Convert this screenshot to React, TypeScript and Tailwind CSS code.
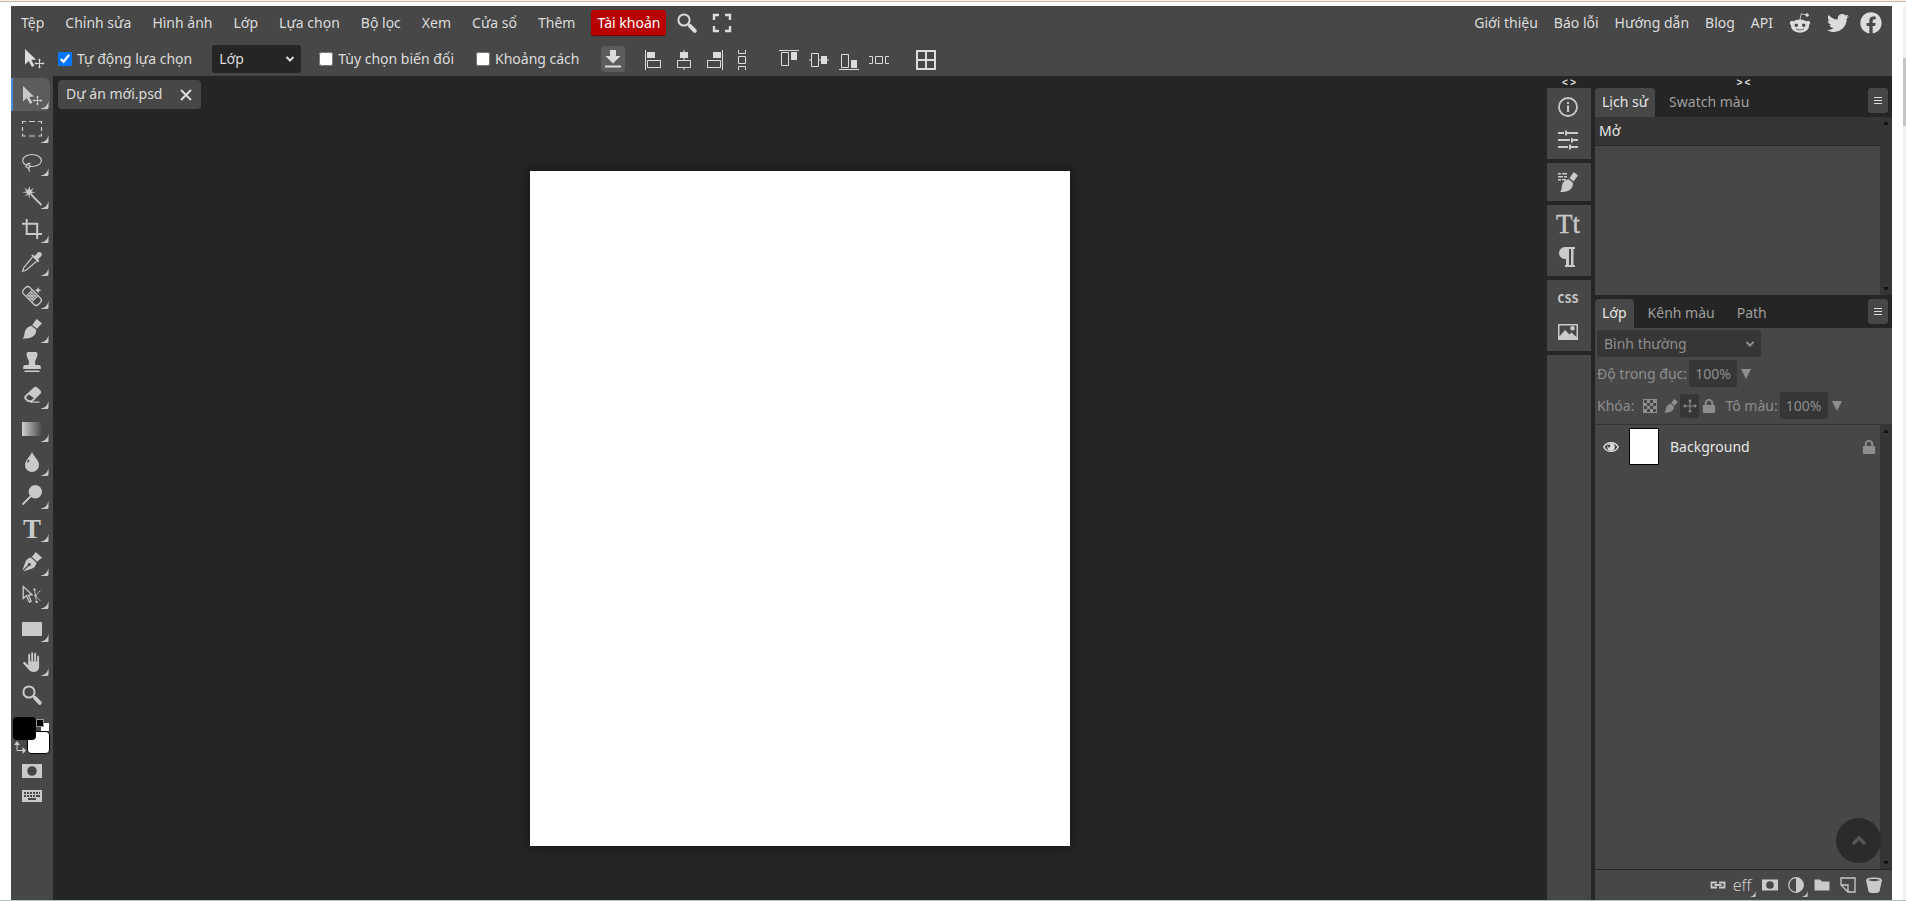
import type { ReactNode } from 'react';
import { FaFacebook, FaRedditAlien, FaTwitter } from 'react-icons/fa';

const menuItems = ['Tệp', 'Chỉnh sửa', 'Hình ảnh', 'Lớp', 'Lựa chọn', 'Bộ lọc', 'Xem', 'Cửa sổ', 'Thêm'];
const siteLinks = ['Giới thiệu', 'Báo lỗi', 'Hướng dẫn', 'Blog', 'API'];

interface IconProps {
  children: ReactNode;
  className?: string;
  viewBox?: string;
}

function Icon({ children, className = 'size-5', viewBox = '0 0 20 20' }: IconProps) {
  return (
    <svg viewBox={viewBox} className={`shrink-0 overflow-visible ${className}`} fill="currentColor" aria-hidden="true">
      {children}
    </svg>
  );
}

/* Shared drawings */

const moveIcon = (
  <>
    <path d="M1 0v15.500l3.800-3.600 3.200 6 2.400-1.300-3.100-5.600 4.700-.500z" />
    <path d="M15.500 10v9M11 14.500h9" stroke="currentColor" strokeWidth="1" />
    <path d="M15.500 9.500l1.500 2h-3zM15.500 19.500l1.500-2h-3zM10.500 14.500l2-1.500v3zM20.500 14.500l-2-1.500v3z" />
  </>
);

const brushIcon = (
  <>
    <path d="M14.500 0L20 4.200l-5 5.600-4.800-3.900z" />
    <path d="M9.500 6.800l4.700 3.900c.300 3.300-1.500 6-4.200 7.300-2.500 1.200-5.800 1.700-9.500 1.500 1.800-1.500 1.700-3.300 2.100-5.500.600-3.600 3.200-6.400 6.900-7.200z" />
  </>
);

const searchIcon = (
  <>
    <circle cx="7" cy="7" r="5.600" fill="none" stroke="currentColor" strokeWidth="2" />
    <path d="M11 11l2.500 2.500" stroke="currentColor" strokeWidth="2" />
    <path d="M13.200 13.200l4.600 4.600" stroke="currentColor" strokeWidth="4" strokeLinecap="round" />
  </>
);

const lockIcon = (
  <>
    <path d="M4.500 9V5.500a3.500 3.500 0 0 1 7 0V9" fill="none" stroke="currentColor" strokeWidth="2" />
    <rect x="1.500" y="7.500" width="13" height="8.500" rx="1.200" />
  </>
);

const maskIcon = (
  <path fillRule="evenodd" d="M0 3h20v14H0zM10 5.200a4.800 4.800 0 1 0 0 9.600 4.800 4.800 0 0 0 0-9.600z" />
);

interface Tool {
  name: string;
  icon: ReactNode;
  single?: boolean;
}

const tools: Tool[] = [
  { name: 'Di chuyển', icon: moveIcon },
  {
    name: 'Vùng chọn',
    icon: <path d="M.500 5V2.500H4M7 2.500h6M16 2.500h3.500V5M19.500 8v4M19.500 14.500V17H16M13 17H7M4 17H.500v-2.500M.500 12V8" fill="none" stroke="currentColor" strokeWidth="1.200" />,
  },
  {
    name: 'Lasso',
    icon: (
      <g fill="none" stroke="currentColor" strokeWidth="1.200">
        <path d="M4.500 13.200C2.200 12.200.700 10.500.700 8.500.700 5 4.800 2.500 10 2.500s9.400 2.500 9.400 6-4.200 6-9.400 6c-1.200 0-2.200-.100-3.200-.300" />
        <path d="M6.500 15c-1.500.700-3 .200-2.600-1 .300-1.400 2.800-1.700 3.600-.500.900 1.400 0 2.700-1.300 3.200M6 16l1.800 3.500M4.500 12.500c2-1.500 3.500-1.500 4-.500" />
      </g>
    ),
  },
  {
    name: 'Đũa thần',
    icon: (
      <>
        <path d="M7.500 0l.700 4.300 3.600-2.500-2.400 3.600 4.400.800-4.400.900 2.200 3.400-3.500-2.300-.900 4.600-.900-4.500-3.700 2.500 2.500-3.700L0 6.300l4.500-.900L2.200 1.800l3.700 2.500z" />
        <path d="M9.500 9l10 10" stroke="currentColor" strokeWidth="1.800" />
      </>
    ),
  },
  {
    name: 'Cắt',
    icon: <path d="M4.700 0v15H20M0 4.700h15.200V20" fill="none" stroke="currentColor" strokeWidth="2" />,
  },
  {
    name: 'Chấm màu',
    icon: (
      <>
        <path d="M10.500 5.200L1.800 15.500.600 19.300 4.400 18 14.600 9.200" fill="none" stroke="currentColor" strokeWidth="1.200" />
        <path d="M9.300 3.500l1.300-1 2.300 1.400 2.600-3.100c1-1.200 2.700-1 3.600 0s1 2.600-.200 3.600l-2.800 2.500 1.200 2.300-1 1.300z" />
      </>
    ),
  },
  {
    name: 'Chữa',
    icon: (
      <>
        <g transform="rotate(45 10 10)">
          <rect x="-.500" y="5.500" width="21" height="9" rx="3" fill="none" stroke="currentColor" strokeWidth="1.300" />
          <path d="M6 5.500v9M14 5.500v9M8 6v8M10 6v8M12 6v8M6 8h8M6 10h8M6 12h8" stroke="currentColor" strokeWidth="1" />
        </g>
        <path d="M16 1l1 2.200 2.500 1-2.500 1L16 7.500l-1-2.300-2.500-1 2.500-1z" />
      </>
    ),
  },
  { name: 'Cọ', icon: brushIcon },
  {
    name: 'Nhân bản',
    single: true,
    icon: <path d="M4.500 2Q4.500 0 6.500 0h7.000Q15.500 0 15.500 2q0 3-1.500 5t-.500 6H17q1.800 0 1.800 2v2H1.200v-2Q1.200 13 3 13h3.500q1-4-.500-6T4.500 2zM2.500 18.500h15V20h-15z" />,
  },
  {
    name: 'Tẩy',
    icon: (
      <>
        <path
          fillRule="evenodd"
          d="M11.800 2.500q1.700-1.500 3.400 0l3.300 3q1.500 1.700 0 3.300L10.200 17H5.800l-3-2.800q-1.500-1.700 0-3.400zM6.900 9.500l-2.500 2.400q-.600.700 0 1.400l2.100 2h2.800l2.500-2.400z"
        />
        <path d="M8 16.500h9.500v1.200H8z" />
      </>
    ),
  },
  {
    name: 'Dải màu',
    icon: (
      <>
        <linearGradient id="tool-gradient">
          <stop offset="0" stopColor="#d0d0d0" />
          <stop offset="1" stopColor="#474747" />
        </linearGradient>
        <rect y="3" width="20" height="14" fill="url(#tool-gradient)" />
      </>
    ),
  },
  {
    name: 'Làm mờ',
    icon: <path fillRule="evenodd" d="M10 0c2 4.500 7 8.500 7 13a7 7 0 0 1-14 0C3 8.500 8 4.500 10 0zM7.200 7.500c-1.400 0-2.200 1.300-2 3 1.300.300 2.400-.900 2-3z" />,
  },
  {
    name: 'Làm sáng',
    icon: (
      <>
        <circle cx="13.300" cy="6.700" r="6.700" />
        <path d="M9 11L.500 19.500" stroke="currentColor" strokeWidth="1.800" />
      </>
    ),
  },
  {
    name: 'Chữ',
    icon: (
      <text x="10" y="19" textAnchor="middle" fontSize="27" fontWeight="700" className="font-['Liberation_Serif',serif]">
        T
      </text>
    ),
  },
  {
    name: 'Bút',
    icon: (
      <>
        <path d="M13.700 0L20 5.800l-3.300 2.400-1.500 1.500-5.500-5 1.700-1.500z" />
        <path fillRule="evenodd" d="M9 5.500l5.500 5.200c-.300 3-2.600 5.300-5 6.100L1.200 19.500l5.600-5.600a1.500 1.500 0 1 0-.900-.900L.300 18.700 3.400 10C4.300 7.500 6.500 5.900 9 5.500z" />
      </>
    ),
  },
  {
    name: 'Chọn đường dẫn',
    icon: (
      <>
        <path d="M1.200 1.500v12l3.200-3 3 6.500 1.800-.900-2.800-6 3.700-.400z" fill="none" stroke="currentColor" strokeWidth="1.300" />
        <path d="M12.500 4.500l2 13M13.500 10.500L18.500 5.500M13.500 11l5 5" stroke="currentColor" strokeWidth=".800" fill="none" />
        <path d="M11.500 3.500h2v2h-2zM12.500 9.700h2v2h-2zM13.700 16h2v2h-2z" />
      </>
    ),
  },
  { name: 'Hình chữ nhật', icon: <rect y="3" width="20" height="14" rx=".500" /> },
  {
    name: 'Bàn tay',
    icon: (
      <>
        <path d="M7.200 11V2.800M10.200 10V1.200M13.200 10V1.600M16.100 11V4.500" stroke="currentColor" strokeWidth="1.900" strokeLinecap="round" />
        <path d="M6.200 9.500h10.900v5c0 3.200-2 5.500-5 5.500-2.800 0-4.600-1-6.100-3.300L1.300 11.500c-.700-1.200.700-2 1.900-1.200l3 3z" />
      </>
    ),
  },
  { name: 'Thu phóng', single: true, icon: searchIcon },
];

function CornerMark({ className }: { className: string }) {
  return (
    <svg viewBox="0 0 8 8" className={`absolute ${className}`} fill="currentColor" aria-hidden="true">
      <path d="M0 7.500Q6 7 7.500 0V6.500Q7.500 8 6 8H0z" />
    </svg>
  );
}

function MenuBar() {
  return (
    <header className="flex h-[34px] items-center justify-between pr-2.5">
      <nav className="flex items-center gap-px">
        {menuItems.map((item) => (
          <button key={item} type="button" className="px-2.5">
            {item}
          </button>
        ))}
        <button type="button" className="ml-[5px] h-[26px] rounded-[3px] border-b border-[#7d0000] bg-[#b80000] px-1.5 text-white">
          Tài khoản
        </button>
        <button type="button" aria-label="Tìm kiếm" className="ml-2.5">
          <Icon>{searchIcon}</Icon>
        </button>
        <button type="button" aria-label="Toàn màn hình" className="ml-3.5">
          <Icon>
            <path d="M2 7V2h5M13 2h5v5M18 13v5h-5M7 18H2v-5" fill="none" stroke="currentColor" strokeWidth="2.400" />
          </Icon>
        </button>
      </nav>
      <nav className="flex items-center gap-4">
        {siteLinks.map((link) => (
          <a key={link} href="#">
            {link}
          </a>
        ))}
        <a href="#" aria-label="Reddit">
          <FaRedditAlien className="size-[22px]" />
        </a>
        <a href="#" aria-label="Twitter">
          <FaTwitter className="size-[22px]" />
        </a>
        <a href="#" aria-label="Facebook" className="-ml-[5px]">
          <FaFacebook className="size-[22px]" />
        </a>
      </nav>
    </header>
  );
}

const chevron = <path d="M1.500 2l3.500 3.500L8.500 2" fill="none" stroke="currentColor" strokeWidth="2" />;

const verticalAligns = [
  {
    name: 'Căn trái',
    icon: <path d="M2.500 0v20M4.500 10.500h13v7h-13z" fill="none" stroke="currentColor" />,
    block: <path d="M4 2h8v6H4z" />,
  },
  {
    name: 'Căn giữa ngang',
    icon: <path d="M10 0v10M10 18v2M3.500 10.500h13v7h-13z" fill="none" stroke="currentColor" />,
    block: <path d="M6 2h8v6H6z" />,
  },
  {
    name: 'Căn phải',
    icon: <path d="M17.500 0v20M2.500 10.500h13v7h-13z" fill="none" stroke="currentColor" />,
    block: <path d="M8 2h8v6H8z" />,
  },
  {
    name: 'Phân bố dọc',
    icon: <path d="M6.500 0v3.500h7V0M6.500 6.500h7v7h-7zM6.500 20v-3.500h7V20" fill="none" stroke="currentColor" />,
    block: null,
  },
];

const horizontalAligns = [
  {
    name: 'Căn trên',
    icon: <path d="M0 .500h20M2.500 2.500h7v13h-7z" fill="none" stroke="currentColor" />,
    block: <path d="M12 2h6v8h-6z" />,
  },
  {
    name: 'Căn giữa dọc',
    icon: <path d="M0 10h2M10 10h10M2.500 3.500h7v13h-7z" fill="none" stroke="currentColor" />,
    block: <path d="M12 6h6v8h-6z" />,
  },
  {
    name: 'Căn dưới',
    icon: <path d="M0 19.500h20M2.500 4.500h7v13h-7z" fill="none" stroke="currentColor" />,
    block: <path d="M12 10h6v8h-6z" />,
  },
  {
    name: 'Phân bố ngang',
    icon: <path d="M0 6.500h3.500v7H0M6.500 6.500h7v7h-7zM20 6.500h-3.500v7H20" fill="none" stroke="currentColor" />,
    block: null,
  },
];

function OptionsBar() {
  return (
    <div className="flex h-9 items-center pt-0.5 pl-[13px]">
      <Icon>{moveIcon}</Icon>
      <label className="ml-3.5 flex items-center gap-[5px]">
        <input type="checkbox" defaultChecked className="size-3.5" />
        Tự động lựa chọn
      </label>
      <div className="relative ml-5">
        <select aria-label="Đối tượng lựa chọn" className="h-7 w-[89px] appearance-none rounded-[3px] bg-[#252525] pl-[7px]">
          <option>Lớp</option>
          <option>Nhóm</option>
        </select>
        <Icon viewBox="0 0 10 8" className="pointer-events-none absolute right-1.5 top-2.5 h-2 w-2.5">
          {chevron}
        </Icon>
      </div>
      <label className="ml-[18px] flex items-center gap-[5px]">
        <input type="checkbox" className="size-3.5" />
        Tùy chọn biến đổi
      </label>
      <label className="ml-[22px] flex items-center gap-[5px]">
        <input type="checkbox" className="size-3.5" />
        Khoảng cách
      </label>
      <button type="button" aria-label="Tải xuống" className="ml-[21px] flex h-[26px] w-6 items-center justify-center rounded-[3px] bg-[#5c5c5c]">
        <Icon>
          <path d="M7 1h6v6h4.500L10 14.500 2.500 7H7zM2 16.500h16v2H2z" />
        </Icon>
      </button>
      <div className="ml-[18px] flex items-center gap-[11px] pt-0.5">
        {verticalAligns.map((align, index) => (
          <button key={align.name} type="button" aria-label={align.name} className={index === 3 ? '-ml-1' : ''}>
            <Icon>
              {align.icon}
              {align.block}
            </Icon>
          </button>
        ))}
      </div>
      <div className="ml-[27px] flex items-center gap-2.5 pt-0.5">
        {horizontalAligns.map((align) => (
          <button key={align.name} type="button" aria-label={align.name}>
            <Icon>
              {align.icon}
              {align.block}
            </Icon>
          </button>
        ))}
      </div>
      <button type="button" aria-label="Lưới" className="ml-[27px] pt-0.5">
        <Icon>
          <path d="M1 1h18v18H1zM10 1v18M1 10h18" fill="none" stroke="currentColor" strokeWidth="2" />
        </Icon>
      </button>
    </div>
  );
}

function Toolbar() {
  return (
    <aside className="w-[42px] shrink-0 bg-[#474747] text-[#cacaca]">
      {/* 19 tools share the column evenly */}
      <div className="grid h-[635px] auto-rows-fr pt-0.5">
        {tools.map((tool, index) => (
          <button
            key={tool.name}
            type="button"
            aria-label={tool.name}
            className={`relative flex items-center pt-0.5 ${
              index === 0 ? 'mr-[3px] rounded-r-md border-l-2 border-[#4a8be0] bg-[#5c5c5c] pl-[9px]' : 'pl-[11px]'
            }`}
          >
            <Icon>{tool.icon}</Icon>
            {!tool.single && <CornerMark className={index === 0 ? 'bottom-0.5 right-px size-2' : 'bottom-0.5 right-1 size-2'} />}
          </button>
        ))}
      </div>

      <div className="relative mt-1.5 ml-0.5 h-[38px]">
        <button type="button" aria-label="Màu nền" className="absolute left-3.5 top-3.5 size-[23px] rounded-sm border border-black bg-white" />
        <span className="absolute left-7 top-1.5 size-2 bg-white" />
        <span className="absolute left-[23px] top-0.5 size-2 border border-[#999] bg-black" />
        <button type="button" aria-label="Màu vẽ" className="absolute left-0 top-0 size-[23px] rounded-[4px] bg-black" />
        <Icon viewBox="0 0 13 13" className="absolute left-0 top-6 size-[13px]">
          <path d="M4 3v6.500h6" fill="none" stroke="currentColor" />
          <path d="M4 0l3 4H1zM13 9.500L9.500 13V6z" />
        </Icon>
      </div>

      <div className="mt-1.5 flex flex-col gap-[5px] pl-[11px]">
        <button type="button" aria-label="Mặt nạ nhanh" className="h-5 w-5">
          <Icon>{maskIcon}</Icon>
        </button>
        <button type="button" aria-label="Bàn phím" className="h-5 w-5">
          <Icon>
            <path
              fillRule="evenodd"
              d="M0 4h20v12H0zM2 6v2h2V6zM5 6v2h2V6zM8 6v2h2V6zM11 6v2h2V6zM14 6v2h2V6zM17 6v2h1V6zM2 9v2h2V9zM5 9v2h2V9zM8 9v2h2V9zM11 9v2h2V9zM14 9v2h4V9zM6 12v2h8v-2z"
            />
          </Icon>
        </button>
      </div>
    </aside>
  );
}

function Workspace() {
  return (
    <main className="flex min-w-0 flex-1 flex-col">
      <div className="h-10 px-[5px] pt-1">
        <div className="flex h-[29px] w-fit items-center gap-[17px] rounded-[4px] bg-[#474747] px-2 pb-0.5">
          <span>Dự án mới.psd</span>
          <button type="button" aria-label="Đóng" className="pt-0.5">
            <Icon viewBox="0 0 14 14" className="size-3.5">
              <path d="M2 2l10 10M12 2L2 12" stroke="currentColor" strokeWidth="2" />
            </Icon>
          </button>
        </div>
      </div>
      <div className="flex flex-1 items-center justify-center">
        <div className="h-[675px] w-[540px] bg-white shadow-[0_0_12px_rgba(0,0,0,0.5)]" />
      </div>
    </main>
  );
}

const sliders = <path d="M0 2h6v2H0zM7 .500h2V2h11v2H9v1.500H7zM0 9h12v2H0zM13 7.500l2 1V9h5v2h-5v1.500h-2zM0 16h10v2H0zM11 14.500h2V16h7v2h-7v1.500h-2z" />;

const sideGroups = [
  [
    {
      name: 'Thông tin',
      icon: (
        <>
          <circle cx="10" cy="10" r="9" fill="none" stroke="currentColor" strokeWidth="1.800" />
          <path d="M9 5h2v2H9zM9 8.500h2V15H9z" />
        </>
      ),
    },
    { name: 'Thuộc tính', icon: sliders },
  ],
  [
    {
      name: 'Cọ',
      icon: (
        <>
          <path d="M0 1h3v1.500H0zM4 1h5v1.500H4zM0 4h5v1.500H0zM6 4h3v1.500H6zM0 7h3v1.500H0zM4 7h4v1.500H4z" />
          <path d="M15.800 0L20 3.500l-4.500 6-4-3.400zM10.800 7.300l4 3.400c.500 3-1 5.800-3.200 7.300-2.500 1.600-5.900 2.300-9.600 2 1.700-1.800 1.500-3.600 1.900-6 .600-3.600 3-6.200 6.900-6.700z" />
        </>
      ),
    },
  ],
  [
    {
      name: 'Ký tự',
      icon: (
        <text x="10" y="19" textAnchor="middle" fontSize="27" stroke="currentColor" strokeWidth=".400" className="font-['Liberation_Serif',serif]">
          Tt
        </text>
      ),
    },
    {
      name: 'Đoạn',
      icon: <path d="M7 0h10v2h-1.500v16H17v2h-5v-2h1V2h-2v16h1v2H7v-2h1v-6H7A6 6 0 0 1 7 0z" />,
    },
  ],
  [
    {
      name: 'Mã CSS',
      icon: (
        <text x="10" y="14" textAnchor="middle" fontSize="12" fontWeight="700" className="font-['DejaVu_Sans_Mono',monospace]">
          CSS
        </text>
      ),
    },
    {
      name: 'Ảnh',
      icon: <path fillRule="evenodd" d="M0 2h20v16H0zM1.500 3.500v11L7 8l4.500 4.500 2-2 5 4.500V3.500zM14.500 4a2.300 2.300 0 1 1 0 4.600 2.300 2.300 0 0 1 0-4.600z" />,
    },
  ],
];

function PanelToggle({ children }: { children: ReactNode }) {
  return (
    <button type="button" className="flex h-3 items-center justify-center gap-0.5 pt-1 font-mono text-[10px] leading-3 font-bold">
      {children}
    </button>
  );
}

function SideStrip() {
  return (
    <aside className="flex w-11 shrink-0 flex-col">
      <PanelToggle>
        <span>&lt;</span>
        <span>&gt;</span>
      </PanelToggle>
      <div className="flex flex-1 flex-col gap-1 text-[#cacaca]">
        {sideGroups.map((group) => (
          <div key={group[0].name} className="flex flex-col gap-[13px] bg-[#474747] py-[9px] pl-[11px]">
            {group.map((item) => (
              <button key={item.name} type="button" aria-label={item.name} className="w-fit">
                <Icon>{item.icon}</Icon>
              </button>
            ))}
          </div>
        ))}
        <div className="flex-1 bg-[#474747]" />
      </div>
    </aside>
  );
}

function PanelTabs({ tabs }: { tabs: string[] }) {
  return (
    <div className="flex h-[29px] justify-between pr-1">
      <div className="flex gap-1.5">
        {tabs.map((tab, index) => (
          <button
            key={tab}
            type="button"
            className={`pb-0.5 ${index === 0 ? 'rounded-t-[4px] bg-[#474747] px-[7px] text-[#e6e6e6]' : 'px-2 text-[#9f9f9f]'}`}
          >
            {tab}
          </button>
        ))}
      </div>
      <button type="button" aria-label="Menu bảng" className="flex h-[25px] w-5 items-center justify-center rounded-[3px] bg-[#474747]">
        <Icon viewBox="0 0 8 8" className="size-2">
          <path d="M0 0h8v1H0zM0 3h8v1H0zM0 6h8v1H0z" />
        </Icon>
      </button>
    </div>
  );
}

function ScrollTrack() {
  return (
    <div className="flex w-3 shrink-0 flex-col items-center justify-between bg-[#353535] py-1 text-[#111]">
      <Icon viewBox="0 0 6 4" className="h-1 w-1.5">
        <path d="M0 4l3-4 3 4z" />
      </Icon>
      <Icon viewBox="0 0 6 4" className="h-1 w-1.5">
        <path d="M0 0l3 4 3-4z" />
      </Icon>
    </div>
  );
}

function PercentField({ id, label }: { id: string; label: string }) {
  return (
    <div className="flex items-center">
      <label htmlFor={id}>{label}</label>
      <input id={id} defaultValue="100%" disabled className="ml-0.5 h-[27px] w-12 rounded-[3px] bg-[#363636] text-center" />
      <Icon viewBox="0 0 10 10" className="ml-1 size-2.5">
        <path d="M0 0h10L5 10z" />
      </Icon>
    </div>
  );
}

function LayersPanel() {
  return (
    <>
      <div className="flex flex-col bg-[#474747] px-0.5 pt-0.5 text-[#8e8e8e]">
        <div className="relative w-fit">
          <select aria-label="Chế độ hòa trộn" disabled className="h-[27px] w-[164px] appearance-none rounded-[3px] bg-[#363636] pl-[7px] opacity-100">
            <option>Bình thường</option>
          </select>
          <Icon viewBox="0 0 10 8" className="pointer-events-none absolute right-1.5 top-2.5 h-2 w-2.5">
            {chevron}
          </Icon>
        </div>
        <div className="mt-[3px]">
          <PercentField id="opacity" label="Độ trong đục:" />
        </div>
        <div className="mt-[5px] mb-[5px] flex items-center">
          <span>Khóa:</span>
          <div className="ml-[9px] mr-2 flex items-center">
            <button type="button" aria-label="Khóa độ trong suốt">
              <Icon viewBox="0 0 14 14" className="size-3.5">
                <path
                  fillRule="evenodd"
                  d="M0 0h14v14H0zM1 1v3h3V1zM7 1v3h3V1zM4 4v3h3V4zM10 4v3h3V4zM1 7v3h3V7zM7 7v3h3V7zM4 10v3h3v-3zM10 10v3h3v-3z"
                />
              </Icon>
            </button>
            <button type="button" aria-label="Khóa điểm ảnh" className="ml-[7px]">
              <Icon className="size-3.5">{brushIcon}</Icon>
            </button>
            <button type="button" aria-label="Khóa vị trí" className="ml-0.5 flex h-6 w-[19px] items-center justify-center rounded-[3px] bg-[#363636]">
              <Icon viewBox="0 0 14 14" className="size-3.5">
                <path d="M7 1v12M1 7h12" stroke="currentColor" />
                <path d="M7 0l2 2.500H5zM7 14l2-2.500H5zM0 7l2.500-2v4zM14 7l-2.500-2v4z" />
              </Icon>
            </button>
            <button type="button" aria-label="Khóa tất cả" className="ml-0.5">
              <Icon viewBox="0 0 16 17" className="size-4">
                {lockIcon}
              </Icon>
            </button>
          </div>
          <PercentField id="fill" label="Tô màu:" />
        </div>
      </div>

      <div className="flex flex-1 border-t border-[#353535] bg-[#474747]">
        <ul className="relative flex-1">
          <li className="flex items-center pt-[3px] pr-[3px] pl-2">
            <button type="button" aria-label="Ẩn lớp">
              <Icon viewBox="0 0 16 12" className="h-3 w-4">
                <path d="M.800 6C3.500.200 12.500.200 15.200 6 12.500 11.800 3.500 11.800.800 6z" fill="none" stroke="currentColor" strokeWidth="1.500" />
                <path fillRule="evenodd" d="M8 2.300a3.700 3.700 0 1 1 0 7.400 3.700 3.700 0 0 1 0-7.400zM6.800 3.800a1.400 1.400 0 1 0 0 2.400 1.400 1.400 0 0 0 0-2.400z" />
              </Icon>
            </button>
            <span className="ml-2.5 h-[37px] w-[30px] border border-black bg-white" />
            <span className="ml-[11px] flex-1 text-[#e6e6e6]">Background</span>
            <Icon viewBox="0 0 16 17" className="size-4 text-[#8e8e8e]">
              {lockIcon}
            </Icon>
          </li>
          {/* Floating back-to-top button */}
          <li className="absolute -right-px bottom-1.5">
            <a href="#" aria-label="Lên đầu trang" className="flex size-[45px] items-center justify-center rounded-full bg-[#2b2b2b] text-[#555]">
              <Icon viewBox="0 0 16 16" className="size-4">
                <path d="M2 11l6-6 6 6" fill="none" stroke="currentColor" strokeWidth="3.500" />
              </Icon>
            </a>
          </li>
        </ul>
        <ScrollTrack />
      </div>

      <div className="flex h-[31px] items-center justify-end gap-2.5 border-t border-[#252525] bg-[#474747] pr-2.5 text-[#cacaca]">
        <button type="button" aria-label="Liên kết lớp">
          <Icon viewBox="0 0 16 16" className="size-4">
            <path d="M7 5.500H1.500v5H7M9 5.500h5.500v5H9M4.500 8h7" fill="none" stroke="currentColor" strokeWidth="1.800" />
          </Icon>
        </button>
        <button type="button" className="relative w-4 text-center text-base leading-4 font-light">
          <span className="-ml-1">eff</span>
          <CornerMark className="-right-1 -bottom-1 size-1.5" />
        </button>
        <button type="button" aria-label="Mặt nạ">
          <Icon className="size-4">{maskIcon}</Icon>
        </button>
        <button type="button" aria-label="Lớp điều chỉnh" className="relative">
          <Icon viewBox="0 0 16 16" className="size-4">
            <circle cx="8" cy="8" r="7.300" fill="none" stroke="currentColor" strokeWidth="1.200" />
            <path d="M8 .500a7.500 7.500 0 0 1 0 15z" />
          </Icon>
          <CornerMark className="-right-1 -bottom-1 size-1.5" />
        </button>
        <button type="button" aria-label="Thư mục mới">
          <Icon viewBox="0 0 16 16" className="size-4">
            <path d="M.500 3Q.500 2.500 1 2.500h5l2 2h7q.500 0 .500.500v8q0 .500-.500.500H1q-.500 0-.500-.500z" />
          </Icon>
        </button>
        <button type="button" aria-label="Lớp mới">
          <Icon viewBox="0 0 16 16" className="size-4">
            <path d="M1 8V1h14v14H8zM1 8h7v7" fill="none" stroke="currentColor" strokeWidth="1.300" />
          </Icon>
        </button>
        <button type="button" aria-label="Xóa">
          <Icon viewBox="0 0 16 16" className="size-4">
            <path fillRule="evenodd" d="M0 3C0-.300 16-.300 16 3l-2.500 11.500c-1 2-10 2-11 0zM2 3c2 1.500 10 1.500 12 0C12 1.800 4 1.800 2 3z" />
          </Icon>
        </button>
      </div>
    </>
  );
}

export default function App() {
  return (
    <div className="flex min-h-screen flex-col bg-white font-['Noto_Sans','Open_Sans',sans-serif] text-sm leading-5 text-[#dcdcdc]">
      <div className="h-0.5 shrink-0 border-b border-[#cdb5a8] bg-[#f8efe9]" />
      <div className="flex flex-1 pt-1 pl-[11px]">
        <div className="flex min-w-0 flex-1 flex-col bg-[#474747]">
          <MenuBar />
          <OptionsBar />
          <div className="flex flex-1 bg-[#252525]">
            <Toolbar />
            <Workspace />
            <SideStrip />
            <section className="ml-1 flex w-[297px] shrink-0 flex-col">
              <PanelToggle>
                <span>&gt;</span>
                <span>&lt;</span>
              </PanelToggle>
              <PanelTabs tabs={['Lịch sử', 'Swatch màu']} />
              <div className="mb-1 flex h-[178px] bg-[#474747]">
                <ul className="flex-1">
                  <li className="h-[29px] border-b border-[#252525] bg-[#353535] px-1 leading-7 text-[#e6e6e6]">Mở</li>
                </ul>
                <ScrollTrack />
              </div>
              <PanelTabs tabs={['Lớp', 'Kênh màu', 'Path']} />
              <LayersPanel />
            </section>
          </div>
        </div>
        <div className="w-[11px] shrink-0" />
        <div className="w-[3px] shrink-0 bg-[#f1f1f1] pt-[52px]">
          <div className="h-[68px] bg-[#c4c4c4]" />
        </div>
      </div>
      <div className="h-px shrink-0 bg-[#b5c4c1]" />
    </div>
  );
}
